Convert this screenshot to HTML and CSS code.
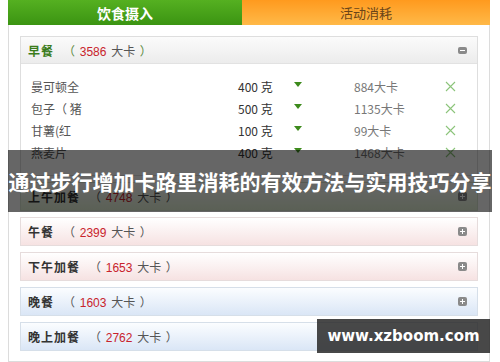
FILE: index.html
```html
<!DOCTYPE html>
<html lang="zh">
<head>
<meta charset="utf-8">
<link rel="stylesheet" href="styles.css">
</head>
<body>
<div class="wrap">
  <div class="tabs">
    <div class="tab tab-food">饮食摄入</div>
    <div class="tab tab-act">活动消耗</div>
  </div>
  <div class="box">
    <div class="panel panel-open">
      <div class="head head-gray">
        <span class="meal meal-green">早餐</span>
        <span class="kc kc-green">（ <span class="num">3586</span> <span class="unit">大卡</span> ）</span>
        <span class="ico ico-minus"></span>
      </div>
      <div class="rows">
        <div class="row"><span class="c-name">曼可顿全</span><span class="c-qty">400 克</span><span class="c-arr"><i class="tri"></i></span><span class="c-kc">884大卡</span><span class="c-x"><svg width="11" height="11" viewBox="0 0 11 11"><path d="M1 1L10 10M10 1L1 10" stroke="#8cc47a" stroke-width="1.1" fill="none"/></svg></span></div>
        <div class="row"><span class="c-name">包子（ 猪</span><span class="c-qty">500 克</span><span class="c-arr"><i class="tri"></i></span><span class="c-kc">1135大卡</span><span class="c-x"><svg width="11" height="11" viewBox="0 0 11 11"><path d="M1 1L10 10M10 1L1 10" stroke="#8cc47a" stroke-width="1.1" fill="none"/></svg></span></div>
        <div class="row"><span class="c-name">甘薯(红</span><span class="c-qty">100 克</span><span class="c-arr"><i class="tri"></i></span><span class="c-kc">99大卡</span><span class="c-x"><svg width="11" height="11" viewBox="0 0 11 11"><path d="M1 1L10 10M10 1L1 10" stroke="#8cc47a" stroke-width="1.1" fill="none"/></svg></span></div>
        <div class="row"><span class="c-name">燕麦片</span><span class="c-qty">400 克</span><span class="c-arr"><i class="tri"></i></span><span class="c-kc">1468大卡</span><span class="c-x"><svg width="11" height="11" viewBox="0 0 11 11"><path d="M1 1L10 10M10 1L1 10" stroke="#8cc47a" stroke-width="1.1" fill="none"/></svg></span></div>
      </div>
    </div>
    <div class="panel head head-green">
      <span class="meal">上午加餐</span>
      <span class="kc">（ <span class="num">4748</span> <span class="unit">大卡</span> ）</span>
      <span class="ico ico-plus"></span>
    </div>
    <div class="panel head head-pink">
      <span class="meal">午餐</span>
      <span class="kc">（ <span class="num">2399</span> <span class="unit">大卡</span> ）</span>
      <span class="ico ico-plus"></span>
    </div>
    <div class="panel head head-pink">
      <span class="meal">下午加餐</span>
      <span class="kc">（ <span class="num">1653</span> <span class="unit">大卡</span> ）</span>
      <span class="ico ico-plus"></span>
    </div>
    <div class="panel head head-blue">
      <span class="meal">晚餐</span>
      <span class="kc">（ <span class="num">1603</span> <span class="unit">大卡</span> ）</span>
      <span class="ico ico-plus"></span>
    </div>
    <div class="panel head head-blue">
      <span class="meal">晚上加餐</span>
      <span class="kc">（ <span class="num">2762</span> <span class="unit">大卡</span> ）</span>
      <span class="ico ico-plus"></span>
    </div>
  </div>
</div>
<div class="banner">通过步行增加卡路里消耗的有效方法与实用技巧分享</div>
<div class="mark">www.xzboom.com</div>
</body>
</html>
```

FILE: styles.css
```css
html, body {
  margin: 0;
  padding: 0;
  background: #fff;
}
body {
  font-family: "Noto Sans CJK SC", "Liberation Sans", sans-serif;
  font-size: 12px;
  color: #444;
  width: 500px;
  height: 362px;
  overflow: hidden;
  position: relative;
}
.wrap {
  margin-left: 8px;
  width: 482px;
}
.tabs {
  display: flex;
  height: 25px;
}
.tab {
  display: flex;
  align-items: center;
  justify-content: center;
  line-height: 1;
}
.tab-food {
  width: 234px;
  background: linear-gradient(#55b021, #3b9412);
  color: #fff;
  font-weight: bold;
  font-size: 14px;
}
.tab-act {
  flex: 1;
  background: linear-gradient(#ff9a1e, #ffb948);
  color: #6a4418;
  font-size: 13px;
}
.box {
  border: 1px solid #dcdcdc;
  border-top: none;
  padding: 11px 11px 8px 11px;
  display: flex;
  flex-direction: column;
  gap: 6px;
  height: 317px;
}
.panel {
  border: 1px solid #dedede;
}
.head {
  height: 27px;
  display: flex;
  align-items: center;
  padding: 0 10px 0 7px;
  box-sizing: border-box;
}
.panel-open .head {
  height: 27px;
  border-bottom: 1px solid #e2e2e2;
}
.panel.head {
  height: 29px;
}
.head-gray { background: linear-gradient(#fbfbfb, #ececec); }
.head-pink { background: linear-gradient(#ffffff, #f6e2e2); border-color: #e6dcdc; }
.head-blue { background: linear-gradient(#fbfdff, #dae6f6); border-color: #d6dfe9; }
.head-green { background: linear-gradient(#ffffff, #e3f1d6); border-color: #d8e4cf; }
.meal {
  font-weight: bold;
  color: #333;
  font-size: 12px;
  letter-spacing: 1px;
}
.meal-green { color: #3a7c1c; }
.kc {
  margin-left: 9px;
  color: #555;
  word-spacing: 2px;
}
.kc-green { color: #5b8a3e; }
.num {
  color: #c8232c;
  font-family: "Liberation Sans", sans-serif;
}
.unit { color: #555; }
.ico {
  margin-left: auto;
  width: 9px;
  height: 9px;
  border-radius: 2px;
  background: #8a8a8a;
  position: relative;
}
.ico-minus {
  height: 7px;
  border-radius: 2px;
}
.ico-minus::after {
  content: "";
  position: absolute;
  left: 2px; right: 2px; top: 3px; height: 1px;
  background: #fff;
}
.ico-plus::before, .ico-plus::after {
  content: "";
  position: absolute;
  background: #fff;
}
.ico-plus::before { left: 2px; right: 2px; top: 4px; height: 1px; }
.ico-plus::after { top: 2px; bottom: 2px; left: 4px; width: 1px; }
.rows {
  padding: 11px 0 12px 10px;
  background: #fff;
}
.row {
  display: grid;
  grid-template-columns: 207px 50px 20px 46px 86px 20px;
  height: 22px;
  align-items: center;
  color: #555;
  white-space: nowrap;
}
.c-qty { color: #333; }
.c-kc { color: #777; grid-column: 5; }
.c-arr, .c-x {
  display: flex;
  justify-content: center;
  align-items: center;
}
.tri {
  width: 0;
  height: 0;
  border-left: 4px solid transparent;
  border-right: 4px solid transparent;
  border-top: 5px solid #3d8a1c;
  margin-top: -4px;
}
.banner {
  position: absolute;
  left: 8px;
  top: 150px;
  width: 484px;
  height: 62px;
  background: rgba(0, 0, 0, 0.6);
  color: #fff;
  font-weight: bold;
  font-size: 21px;
  display: flex;
  align-items: center;
  justify-content: center;
  white-space: nowrap;
}
.mark {
  position: absolute;
  left: 317px;
  top: 319px;
  width: 173px;
  height: 34px;
  background: rgba(40, 40, 40, 0.85);
  color: #fff;
  font-family: "DejaVu Sans", sans-serif;
  font-weight: bold;
  font-size: 15px;
  display: flex;
  align-items: center;
  justify-content: center;
}
```
